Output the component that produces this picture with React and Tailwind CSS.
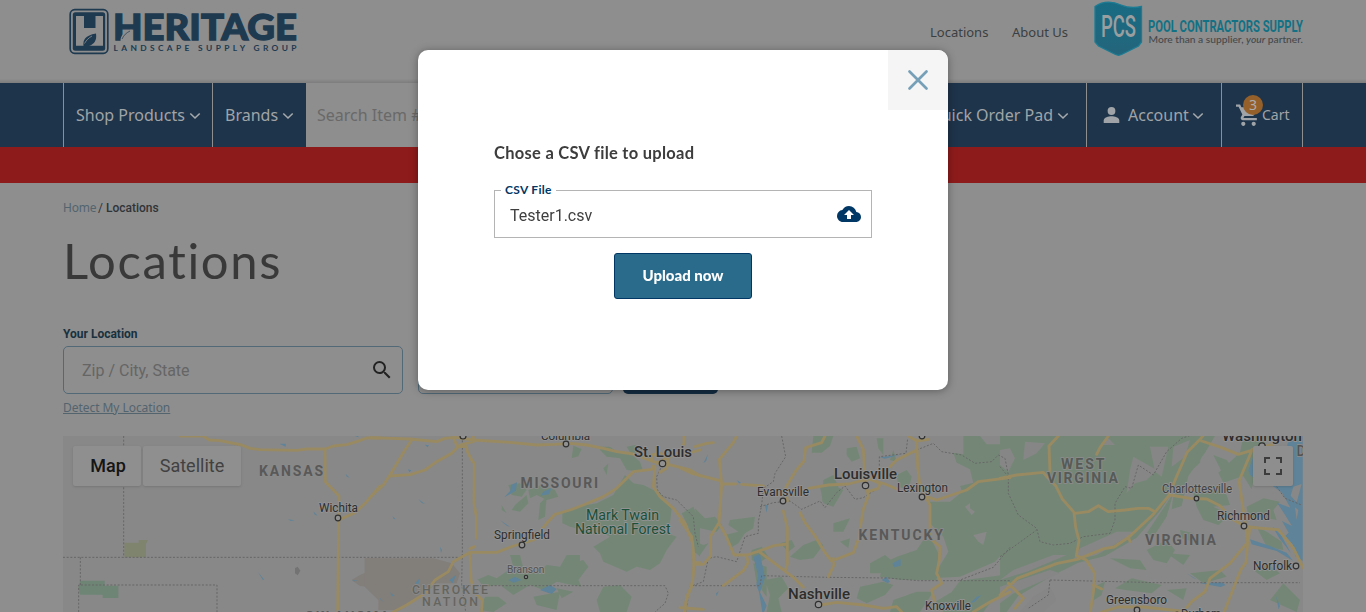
import React from "react";

const GREEN = "#748776";
const ROAD = "#998a62";
const WATER = "#5f8398";

function Chevron() {
  return (
    <svg width="12" height="8" viewBox="0 0 12 8" fill="none" stroke="#a5a9ad" strokeWidth="1.6" className="mt-0.5 shrink-0">
      <path d="M1.300 1.500 6 6 10.700 1.500" />
    </svg>
  );
}

function HeritageLogo() {
  return (
    <svg width="232" height="50" viewBox="68 6 232 50" className="shrink-0">
      <rect x="70.2" y="9.7" width="37.6" height="43.6" rx="4.5" fill="none" stroke="#1e3a50" strokeWidth="1.7" />
      <rect x="72.8" y="12.3" width="32.4" height="38.4" rx="2.5" fill="#1e3a50" />
      <path d="M76 16h8v12h11.500V16h7.500v29.700H76Z" fill="#8e8e8e" />
      <path d="M83.500 46c-.8-6 1.500-10.500 12.500-12.500 1 6.500-1.500 10.500-7 12.500Z" fill="#1e3a50" />
      <path d="M84.500 43.500c2-3.500 4-5.500 7.500-7.500" fill="none" stroke="#8e8e8e" strokeWidth=".8" />
      <text x="113" y="40" textLength="184" lengthAdjust="spacingAndGlyphs" fontFamily="Lato" fontWeight="900" fontSize="36" fill="#1e3a50" stroke="#1e3a50" strokeWidth="1.300">HERITAGE</text>
      <path d="M120.500 41c0-6 4-9.500 11-11.500.5 6-2 10-7 10l-2 1.500Z" fill="#8e8e8e" />
      <path d="M122 39c2-4 4-6 8-8" stroke="#1e3a50" fill="none" strokeWidth=".7" />
      <text x="113.500" y="51" textLength="183" fontFamily="Lato" fontWeight="700" fontSize="8.400" fill="#1e3a50">LANDSCAPE SUPPLY GROUP</text>
    </svg>
  );
}

function PcsLogo() {
  return (
    <svg width="212" height="58" viewBox="1093 0 212 58" className="shrink-0">
      <defs>
        <linearGradient id="shield" x1="0" y1="0" x2="0" y2="1">
          <stop offset="0" stopColor="#176b83" />
          <stop offset="1" stopColor="#24657b" />
        </linearGradient>
      </defs>
      <path d="M1095 6.500c8-5.500 18-5 26-1.500 7 3 14 3 20.500 1.500v35.500l-3 4-17 8.500q-3 1.500-6 0l-17-8.500-3.500-4Z" fill="url(#shield)" stroke="#1c7c94" strokeWidth="1.300" />
      <text x="1101" y="36.800" textLength="35" lengthAdjust="spacingAndGlyphs" fontFamily="Roboto" fontWeight="500" fontSize="30.500" fill="#9a9e9f">PCS</text>
      <text x="1148" y="32.300" textLength="155" lengthAdjust="spacingAndGlyphs" fontFamily="Roboto" fontWeight="700" fontSize="17" fill="#127184">POOL CONTRACTORS SUPPLY</text>
      <text x="1148.500" y="43" textLength="154.500" lengthAdjust="spacingAndGlyphs" fontFamily="Lato" fontWeight="500" fontSize="9.300" fill="#45494c">More than a supplier, <tspan fontStyle="italic">your</tspan> partner.</text>
    </svg>
  );
}

function City({ x, y, r = 2.8 }) {
  return <circle cx={x} cy={y} r={r} fill="#919191" stroke="#303030" strokeWidth="1.200" />;
}

function Label({ x, y, w, size = 12, color = "#2d2d2d", weight = 400, state = false, children }) {
  return (
    <text
      x={x} y={y} textLength={w} lengthAdjust={state ? "spacing" : "spacingAndGlyphs"} fontSize={size} fill={color} fontWeight={weight}
      stroke={state ? "#8a8a8a" : "#929292"} strokeWidth="1.800" strokeLinejoin="round" paintOrder="stroke"
    >
      {children}
    </text>
  );
}

function MapCanvas() {
  const west = "translate(50 420) scale(.33333)";
  const mid = "translate(370 380) scale(.33333)";
  const east = "translate(680 420) scale(.33333)";
  const coast = "translate(1000 420) scale(.33333)";
  return (
    <svg width="1240" height="176" viewBox="63 436 1240 176" className="block bg-[#888888]" fontFamily="Roboto">
      <g fill={GREEN}>
        <g transform={west}>
          <path fill="#7f846f" d="M223 368h43v-8h28l-6 12v40h-65Z" />
          <path fill="#6e8575" d="M91 482h73v15h41v37h-47v-10H91l-6-20Z" />
          <path fill="#827e7a" d="M945 415h45v117l-28-32-32-2-25-18 25-15 20-8Z" />
          <path fill="#737373" d="m735 445 8-5 8 12-8 14-8-6Z" />
        </g>
        <g transform={mid}>
          <path fill="#827e7a" d="M-16 535h206l55 15 25 30-10 30-60 0-50 40-60 40H25V660L-16 620Z" />
          <path d="m765 285 25 25 30 5 50 25 35 45-5 45-20 25 40 15-30 40-20 40-30 20-40-10-30 15-70-30-10-25-20-20 50-30-30-15-50-5-40-10-23-10v-30l43-20 60-10 50-25Z" />
          <path d="m605 235 5-38 25 10-10 22ZM690 200l30 0 20 15 40 5 30 25 10 30-50-5-20-35-40-5-20-20ZM700 265l15-15-5 35ZM770 200l25-5 25 15-35 15Z" />
          <path d="m415 315 35-5 20 20-15 20-30-5ZM475 330l40-15 40 15 10 20-35 10-30-15-20 10ZM435 375l35-30 5 25-25 25-25-5ZM510 370l20-20-5 60-20 10ZM395 375l15 25-15-10Z" />
          <path d="m320 600 35-15 25 10 50-35-10-35h30l10 40 40 15 30-25 40 5 20-35h40l0 50-20 40-50-10-40 25-40-15-50 30-40-30-50 5-15-20ZM570 560l70-20 15 20-30 40 10 20-55-10ZM680 660l20-40 50-5 35 35-15 46h-80Z" />
          <path d="m345 650 40 0 25 20-40 26-40-6ZM490 650l80-15-10 55-60-15ZM560 625l50 10-35 20ZM935 400l35-20 20 50v100l-20-20-15-70Z" />
        </g>
        <g transform={east}>
          <path d="m400 48h60l-10 30-25 20-30 0ZM500 85l30-5 10 35-25 10-15-20ZM590 55l20 0v50l-15-20ZM430 180l30-15 15 35-20 50-28-5ZM650 165l30-15 15 20-10 40-30-10ZM630 120l10-30 10 35Z" />
          <path d="m850 48 50 0 20 25 40 0 30-25v190l-40 20-30 10-20-25-40 0-20-45 40-10-10-40-40-20-10-30 30 5ZM750 245l60 0 50-40 130-10v180l-45 50-105 45-90 5 25-30 30-50-15-45-40-40Z" />
          <path d="m650 410 60-20 20-30 25 0 20 40-5 80-110 0-60-10 10-40ZM570 430l45-25 30 25-20 30-55 0ZM840 482l150-20v60l-50 15-30 39H790l-25-30 50-30ZM540 500l70-15 30 10-25 30-55 25-30-15ZM640 540l70-25 50 0-40 61h-90Z" />
          <path d="m45 265 30 30 30-5 20 25-15 20-50-10-10-30ZM150 300l75-10-5 35-25 15-20 30-25 15-15-40 40-10-30-20ZM35 360l35 15 15-5-25 35-20-10ZM420 200l40-5 30 15-30 50-30-10ZM370 375l40-15 20 15-30 40-40 5-30-10ZM460 310l50-15-20 40-30 0ZM215 390l30-10 20 30-30 20-20-10ZM480 365l30-10-5 30ZM300 370l35-10 10 20-20 15Z" />
          <path d="m255 480 50-10 20 35-30 30 10 41h-45l10-50ZM220 430l40 10 0 90-30-40Z" />
          <path fill="#888888" d="m855 260 15-10 0 15 15 10-10 10ZM880 345l40-10-10 40-15-10Z" />
        </g>
        <g transform={coast}>
          <path d="M0 48h610l-10 80-45 40-45 60-30 45-70 80-95 55-80 20-80 40-100 60-35 48H0Z" />
          <path d="m575 48 70 0-30 50-50 70-20 90-30 10 10-80ZM640 105l40 15 20 25-35 10ZM730 48h75l-30 60-20 100-25-40-60 20-15-30 65-60ZM580 220l70-15 30 20 10 30-50 5 50 25-35 30-45-15-20-40ZM740 260l50-25 50 10-20 25 10 30-50-10-35 5ZM770 320l30 15 45 30 5 25-50-10ZM520 220l-20 70-40 60-20-10Z" />
          <path d="m440 390 60-30 25 30-25 40-40-10ZM330 415l90 5 20 30-50-5ZM540 330l40 10 0 25-35-10ZM570 460l90-10 20 20-70 20ZM345 505l50-30 90 20-30 25-80-10ZM280 500l35-15-10 40-30 20ZM500 400l70 5-20 30ZM760 450l40-20 40 30-40 20ZM810 540l40-50 50 50-10 36ZM500 510l60-5-10 35Z" />
          <path fill="#868686" d="m0 90 30-5 15 30-20 40-25-20ZM75 65l60 5-25 30-40 20ZM400 110l70 40-30 30-35 10-25 30 10-70ZM305 70l20-15 20 20-40 0ZM240 385l110-50 60 0-120 70-70 15ZM40 450l120-45 40 0-120 50-80 25ZM450 80l55 0-20 90-20-15ZM520 80l50-20-15 50-40 30ZM0 500l150-50 30 10-140 60-40 30ZM100 530l50-30 20 40-40 36H60Z" />
        </g>
      </g>
      <g fill={WATER}>
        <path transform={west} d="m688 71 19 0 0 9ZM915 48h10v4ZM887 161l12 12-9-3ZM790 274l13 13-9-3ZM714 298l20 3-12 2ZM623 455l20 24-5 0ZM907 480l18 2-15 2Z" />
        <path transform={mid} d="m423 315 18-8-3 25-35 20 18-20ZM520 335l25-12-8 20-25 4ZM390 420l30 20-10-3ZM145 357l20 15-10-3ZM67 408l10 10-6-1ZM165 194l12 2-5 6ZM114 268l10 3-6 6ZM210 500l6 10-3 10ZM135 610l15-16-5 20ZM238 600l20-15-10 25ZM60 637l14 11-8 1ZM30 653l10 12-8-5ZM415 600l20-10 20 10-25 8ZM510 630l30-15 20 12-15 15Z" />
        <path transform={east} d="m70 130 14-28-5 20ZM170 180l15 10-8 0ZM255 255l9 0-4 23ZM220 410l20-8 15 70-15 45 20 40-8 19h-5l-10-60-8-20 5-30ZM637 430l25-13 0 20-20 5ZM605 480l15-10 10 16-8 3ZM108 520l8-6-6 15ZM870 550l20-20 15-5-20 20ZM600 112l60-8-45 12Z" />
        <path transform={coast} d="m862 72 15-24h31v375l-22-15-8-35-22-25 10-10-20-35 30 15-25-40-20-30 40 15-25-45-35-25 10-10 20 5-10-30-30-40 40 0 20-10ZM750 358l60 20 50 20 20 25-50-30-75-20ZM818 320l25 25 30 55-35-45Z" />
        <path transform={coast} d="m745 150 15-40 10 70-20-15ZM560 460l30 18-10-4ZM600 490l65-3 12 8-15 6ZM828 528l12 30-4 10Z" />
        <path transform={coast} fill="#888888" d="m880 200 25-8-15 55-18-20ZM885 262l10 8-5 30Z" />
      </g>
      <g fill="none" stroke="#666666" strokeWidth="3" strokeDasharray="6 5">
        <path transform={west} d="M221 48v364M39 412h990M91 412v83M86 576v-81h415v81" />
        <path transform={mid} d="M277 170v350l-2 90 12 86M70 532h205M275 617h610l10 23-10 30-30 26M877 255l-17 35 2 40 18 20 40 10 30 30 20 20 5 50 10 40" />
        <path transform={east} d="m305 48 12 62-32 50-5 25-30 20-5 50-10 50 0 35-40 10-15 45-10 30-60-15-25 5-15 70-40 15-15 90M240 260l40-12 50-5 35 25 55-25 15 20 35-45 25-20 30 40 25-5 45-30M598 170v-60l80-10 5-45M710 90l50-20 25 25 60 10 40 25 50-5 20-20 20 10 10 50M45 497h195l5-30 200 5 180 2 90 8h120l105-40 50-60M840 482h150" />
        <path transform={coast} d="m0 140 25 30 0 50 30 65 55 40 10 40 40 10 50-5 40-20 80-10 15-40 0-50 30-50 20 5 20-70 45 30 40-70 45-40 30-10M0 410l110-80M150 480l320 8h430M150 480l-5 45-60 40M830 200l25 35 50 20" />
      </g>
      <g fill="none" stroke={ROAD} strokeWidth="8.500" strokeLinejoin="round" strokeLinecap="round">
        <path transform={west} d="M390 48h70l18 12 32 2 65 13 25 10 30 4 110 2 30-4h55l25-9 40-4 30-9 30-11h40M825 87l1 98 41 43-1 72-3 276M866 300l49-22 35-33 40-47" />
        <path transform={mid} d="m0 173 120 4 80 8 25-10 30-3 55 8 110 7 80 8 55-2 45-3 50 5 50 10 40 10 50 7 60 23 50 10 60 15 30 18M125 180l-20 30-45 75-20 30-40 37M60 288l60-4 45-14 35-25 45-25 25-25 40-10v-25M250 172l12 28h28l2 15 13 25 8 10-1 120 7 40v65M850 258l-5 10-55 7-50 50-40 25-60 25-40 15-45 13-25 27-20 25-20 25-60 18-50 19h-80l-50 28-15 30-40 25-30 40-55 35-40 21M300 517l3 83 12 40 22 20-2 36M300 506l14-6M855 260l-5 60 20 30 40 35 35 45 23 60 4 70-7 60-15 30-5 46M860 250l70-35 12-25v-22M925 228l65-18M972 548h18M845 240l0-15 25-5 25 15-5 30-20 12" />
        <path transform={east} d="m0 143 35 17 85 22 5 10h42M170 48l-10 20-42 50 7 75-8 115-25 40 0 60-22 25H45M185 193l65 5M0 300l35 50 8 75-5 60-20 60-5 31M117 310l20 35 25 60h40l30-10 50-18 40-5M130 497l60-45 15-25-5-18M240 397l60 45 40 30 30 30M310 273l12 50v110l-5 15M435 48l-10 20-48 15-5 40-25 30-30 50 5 40M385 205l60-10 60-3 60-15 50 15 35 15M530 48l20 40 5 90 10 50-15 40-5 30-10 60-15 40-65 25-20-25-30-50-30-40-15-30M460 415l2 20-17 35M565 215l30-10 5-15-25-10M685 48l25 15 35-5M710 60l3 80 7 60 30 55v100l30 25-2 40-8 40 15 30-30 20 10 40 20 20M710 90l-60 30-20 20M740 230l30 10 90-30 35-25 95-12M420 555l50-8 80 8 60 10 40-5 15 16M880 576l50-30 60-30M0 563l70 5M45 80l35-10 20-2" />
        <path transform={coast} d="m0 175 50-10 80-8 12 15 25 25 20 40 35 40 5 45 10 40-8 45 30 13 25 40-3 50-10 66M175 48l-28 30 3 80M325 48l-25 35-10 20M232 418l-60 12-120 45-52 50M25 490l45 45-25 30M225 280l40-5 30-18 30 18 50-5 40-5 30 0 20 10M232 418l80-32 30-5 45-30 70-65 50-60 20-50 35-80 40-40 15-18M605 63l60 20 50 20 50-15 60-17M757 88l-40 95 12 80 8 55 6 50-5 60-15 20-20 50-35 90M510 225l60 10 50 2 40 20 35 40 40 22 40 5 60 5 45 55 30 60 25 15M740 370l-50 60-60 45-15 40-40 30-25 30M280 495l25 12M385 350l5 15M750 322l-8 55M305 576l50-15 75 0 110 12" />
      </g>
      <Label x="541" y="439.500" w="49" size="11.500">Columbia</Label>
      <Label x="1222" y="441" w="80" size="14.500" weight="500">Washington</Label>
      <City x="463" y="436" r="3" /><City x="566" y="444" /><City x="922" y="436" /><City x="1262" y="446" r="3.200" />
      <Label x="259" y="476" w="64" size="14" color="#595959" weight="700" state>KANSAS</Label>
      <Label x="520.500" y="487.500" w="77.500" size="14" color="#595959" weight="700" state>MISSOURI</Label>
      <Label x="858.500" y="539.500" w="84.500" size="14" color="#595959" weight="700" state>KENTUCKY</Label>
      <Label x="1061" y="469" w="43.500" size="14" color="#555b56" weight="700" state>WEST</Label>
      <Label x="1047" y="483" w="71" size="14" color="#555b56" weight="700" state>VIRGINIA</Label>
      <Label x="1145" y="545" w="71" size="14" color="#595959" weight="700" state>VIRGINIA</Label>
      <Label x="1296.500" y="456" w="10" size="14" color="#555" weight="500" state>D</Label>
      <Label x="412" y="593.500" w="76" size="12.300" color="#65655f" weight="500" state>CHEROKEE</Label>
      <Label x="422" y="605.500" w="56" size="12.300" color="#65655f" weight="500" state>NATION</Label>
      <Label x="305" y="620" w="84" size="13.500" color="#595959" weight="700" state>OKLAHOMA</Label>
      <Label x="319" y="512" w="39" size="12">Wichita</Label><City x="338" y="518" />
      <Label x="634" y="456.500" w="58" size="15" weight="500">St. Louis</Label><City x="662.500" y="463.500" r="3.200" />
      <Label x="494" y="539" w="56" size="12">Springfield</Label><City x="522" y="545" />
      <Label x="507" y="573" w="37.500" size="11" color="#535353">Branson</Label><City x="526" y="577" r="1.700" />
      <Label x="586" y="519.500" w="73" size="14.500" color="#1a5037">Mark Twain</Label>
      <Label x="575" y="533.500" w="95.500" size="14.500" color="#1a5037">National Forest</Label>
      <Label x="757" y="496" w="52" size="12">Evansville</Label><City x="783" y="501" />
      <Label x="834" y="478.500" w="63" size="15" weight="500">Louisville</Label><City x="865.500" y="485.500" r="3.200" />
      <Label x="897" y="492" w="51" size="12">Lexington</Label><City x="922" y="497" />
      <Label x="788" y="598.500" w="62" size="15" weight="500">Nashville</Label><City x="818.500" y="604.500" r="3.200" />
      <Label x="925" y="610" w="46" size="12">Knoxville</Label>
      <Label x="1162" y="493" w="70" size="12" color="#414141">Charlottesville</Label><City x="1196.500" y="498.500" r="2.300" />
      <Label x="1217" y="520" w="53" size="12">Richmond</Label><City x="1244" y="526" />
      <Label x="1253" y="570" w="39" size="12">Norfolk</Label><City x="1296" y="566" />
      <Label x="1106" y="604" w="61" size="12">Greensboro</Label><City x="1137" y="610" />
      <Label x="1181" y="618" w="40" size="12">Durham</Label><City x="1177" y="614" r="2" />
    </svg>
  );
}

function Header() {
  return (
    <header className="flex h-[83px] items-start bg-linear-to-b from-[#8e8e8e] from-95% to-[#7d7d7d] pl-[68px] pr-[61px]">
      <div className="pt-1.5"><HeritageLogo /></div>
      <nav className="ml-auto mr-[25px] flex gap-[25px] pt-[22px] font-['Noto_Sans'] text-[13px] leading-5 text-[#3b3f42]">
        <a className="w-[57px] whitespace-nowrap">Locations</a>
        <a className="w-[56px] whitespace-nowrap">About Us</a>
      </nav>
      <PcsLogo />
    </header>
  );
}

function NavBar() {
  return (
    <div className="flex h-16 bg-[#1e344a] pl-[63px] pr-[63px] font-['Noto_Sans'] text-base text-[#a0a4a8]">
      <div className="flex w-[149px] items-center gap-1 border-l border-[#8e8e8e] pl-3 whitespace-nowrap">Shop Products<Chevron /></div>
      <div className="flex w-[94px] items-center gap-1 border-l border-[#8e8e8e] pl-3 whitespace-nowrap">Brands<Chevron /></div>
      <div className="flex w-[480px] items-center bg-[#8e8e8e] pl-[11px] text-[#696969]">Search Item #, Keyword</div>
      <div className="flex flex-1 items-center justify-end gap-1 pr-[17px] whitespace-nowrap">Quick Order Pad<Chevron /></div>
      <div className="flex w-[135px] items-center border-l border-[#8e8e8e] pl-4 whitespace-nowrap">
        <svg width="17" height="16" viewBox="0 0 17 16" fill="#a0a4a8" className="mr-2">
          <circle cx="8.500" cy="4" r="3.900" /><path d="M.7 16v-2.500C.7 10.500 5.500 9.200 8.500 9.200s7.800 1.300 7.800 4.300V16Z" />
        </svg>
        <span className="mr-[3px]">Account</span><Chevron />
      </div>
      <div className="flex w-[82px] items-center border-x border-[#8e8e8e] pl-3.5 text-sm">
        <div className="relative">
          <svg width="25" height="25" viewBox="0 0 24 24" fill="#a0a4a8" className="block">
            <path d="M7 18c-1.100 0-2 .9-2 2s.9 2 2 2 2-.9 2-2-.9-2-2-2zM0 1.500v2h2.500l3.600 7.590-1.350 2.450c-.16.28-.25.61-.25.96 0 1.100.9 2 2 2h13.500v-2H7.420c-.14 0-.25-.11-.25-.25l.03-.12.900-1.630h7.450c.75 0 1.410-.41 1.750-1.030l3.580-6.490A1 1 0 0 0 20 4H5.210L4 1.500H0zm17 16.500c-1.100 0-2 .9-2 2s.9 2 2 2 2-.9 2-2-.9-2-2-2z" />
          </svg>
          <span className="absolute -top-2 left-[7px] flex size-5 items-center justify-center rounded-full bg-[#95602a] font-['Noto_Sans'] text-[14px] text-[#adadad]">3</span>
        </div>
        <span className="ml-px">Cart</span>
      </div>
    </div>
  );
}

function UploadDialog() {
  return (
    <div className="fixed inset-0 flex justify-center pt-[50px]">
      <section className="relative flex h-[340px] w-[530px] flex-col overflow-hidden rounded-[10px] bg-white px-[76px] pt-[91px] shadow-[0_1px_8px_rgba(0,0,0,0.35)]">
        <button className="absolute top-0 right-0 flex size-[60px] items-center justify-center bg-[#f5f5f5]">
          <svg width="22" height="22" viewBox="0 0 22 22" stroke="#76a0b8" strokeWidth="2.700" strokeLinecap="round"><path d="m2.500 2.500 17 17M19.500 2.500l-17 17" /></svg>
        </button>
        <h2 className="h-[49px] font-['Lato'] text-[16.5px] leading-6 font-bold tracking-[0.27px] whitespace-nowrap text-[#3d3d3d]">Chose a CSV file to upload</h2>
        <div className="relative flex h-12 shrink-0 items-center justify-between border border-[#b4b4b4] pr-2.5 pl-[15px]">
          <span className="absolute -top-[9px] left-1.5 bg-white px-1 font-['Lato'] text-[12px] leading-4 font-bold tracking-[0.3px] whitespace-nowrap text-[#003764]">CSV File</span>
          <span className="pt-[3px] font-['Roboto'] text-base text-[#3f3f3f]">Tester1.csv</span>
          <svg width="24" height="24" viewBox="0 0 24 24" fill="#003764"><path d="M19.350 10.040A7.490 7.490 0 0 0 12 4C9.110 4 6.600 5.640 5.350 8.040A5.994 5.994 0 0 0 0 14c0 3.310 2.690 6 6 6h13c2.760 0 5-2.240 5-5 0-2.640-2.050-4.780-4.650-4.960zM14 13v4h-4v-4H7l5-5 5 5h-3z" /></svg>
        </div>
        <button className="mt-[15px] h-[46px] w-[138px] self-center rounded-[3px] border border-[#003764] bg-[#2a6b8b] pb-0.5 font-['Lato'] text-[15px] font-black whitespace-nowrap text-white">Upload now</button>
      </section>
    </div>
  );
}

export default function App() {
  return (
    <div className="h-[612px] w-[1366px] overflow-hidden bg-[#8e8e8e]">
      <Header />
      <NavBar />
      <div className="h-9 bg-[#8e1b1b]" />
      <main className="px-[63px] font-['Roboto']">
        <div className="flex h-[51px] gap-[3px] pt-4 text-[12px] leading-[18px] text-[#303438]">
          <span className="w-[32px] font-['Noto_Sans'] tracking-[-0.2px] text-[#53646f]">Home</span><span>/</span><span className="font-medium">Locations</span>
        </div>
        <h1 className="h-[92px] font-['Lato'] text-[49px] leading-[52px] tracking-[1.65px] text-[#393939]">Locations</h1>
        <div className="h-5 text-[12px] leading-4 font-bold text-[#18313f]">Your Location</div>
        <div className="flex gap-[15px]">
          <div className="flex h-12 w-[340px] items-center justify-between rounded-[5px] border border-[#526a78] pr-2 pl-[18px] text-base text-[#656565]">
            <span className="pt-0.5">Zip / City, State</span>
            <svg width="24" height="24" viewBox="0 0 24 24" fill="#222"><path d="M15.500 14h-.79l-.28-.27A6.471 6.471 0 0 0 16 9.500 6.500 6.500 0 1 0 9.500 16c1.610 0 3.090-.59 4.230-1.570l.27.28v.79l5 4.990L20.490 19l-4.990-5zm-6 0a4.500 4.500 0 1 1 0-9 4.500 4.500 0 0 1 0 9z" /></svg>
          </div>
          <div className="h-12 w-[195px] rounded-[5px] border border-[#526a78]" />
          <div className="-ml-[5px] h-12 w-[95px] rounded-[5px] bg-[#142d42]" />
        </div>
        <div className="h-[42px] pt-[5px] font-['Noto_Sans'] text-[12px] leading-[18px] tracking-[-0.05px] text-[#53646f] underline">Detect My Location</div>
        <div className="relative">
          <MapCanvas />
          <div className="absolute top-2.5 left-2.5 flex h-10 gap-0.5 text-[18px] text-[#414141]">
            <button className="w-[68px] rounded-xs bg-[#8f8f8f] pb-0.5 pl-0.5 font-medium text-[#151515] shadow-sm">Map</button>
            <button className="w-[98px] rounded-xs bg-[#8f8f8f] pb-0.5 shadow-sm">Satellite</button>
          </div>
          <button className="absolute top-2.5 right-2.5 flex size-10 items-center justify-center rounded-xs bg-[#8e8e8e] shadow-sm">
            <svg width="18" height="18" viewBox="0 0 18 18" fill="none" stroke="#3c3c3c" strokeWidth="2"><path d="M1 6V1h5M12 1h5v5M17 12v5h-5M6 17H1v-5" /></svg>
          </button>
        </div>
      </main>
      <UploadDialog />
    </div>
  );
}
